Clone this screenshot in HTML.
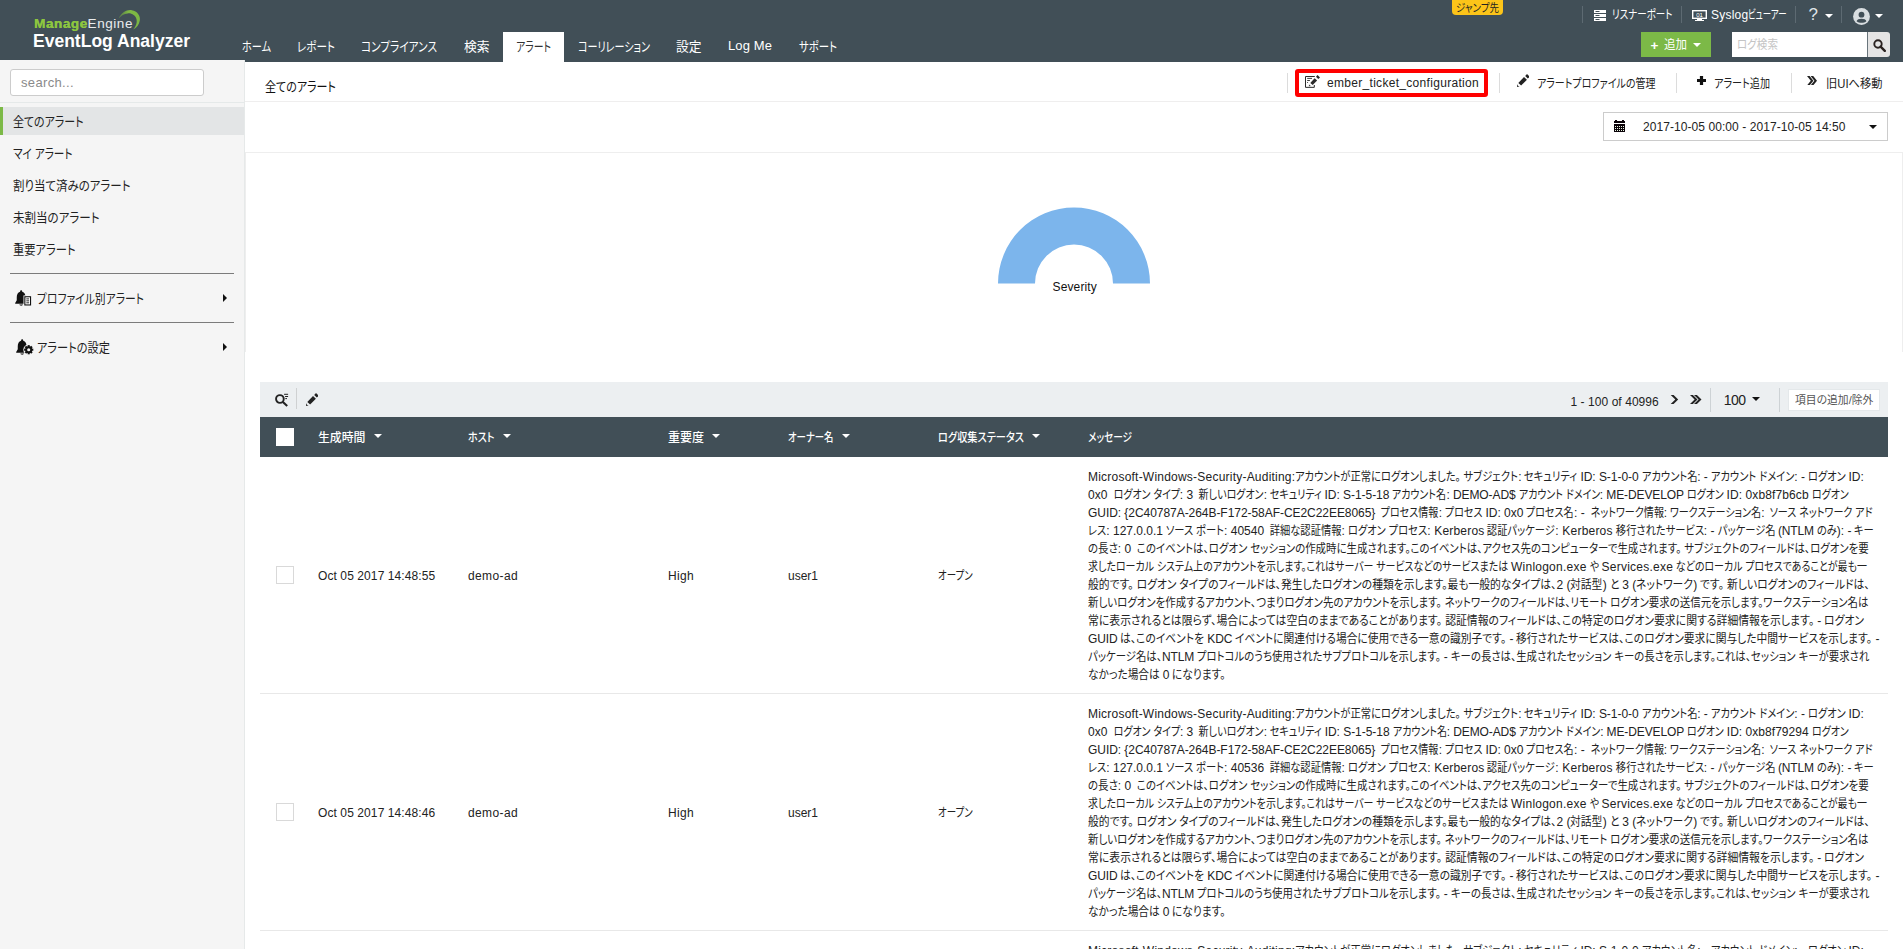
<!DOCTYPE html>
<html lang="ja"><head>
<meta charset="utf-8">
<title>EventLog Analyzer</title>
<style>
*{box-sizing:border-box;margin:0;padding:0}
html,body{width:1903px;height:949px;overflow:hidden;background:#fff}
body{font-family:"Liberation Sans","Noto Sans CJK JP",sans-serif;font-size:12px;color:#222;position:relative}
.abs{position:absolute;white-space:nowrap}
.j{display:inline-block;transform-origin:0 50%;font-feature-settings:"palt";white-space:pre}
.l{white-space:pre}
.t{white-space:pre;display:inline-block}
/* header */
#hdr{position:absolute;left:0;top:0;width:1903px;height:62px;background:#414f57}
#logo1{left:34px;top:15.5px;font-size:13.5px;line-height:16px;font-weight:bold;color:#8dc63f;text-shadow:.35px 0 0 #8dc63f}
#logo1 i{text-shadow:none}
#logo1 i{color:#e9ecee;font-weight:normal;font-style:normal}
#logo2{left:33px;top:31px;font-size:17.5px;line-height:20px;font-weight:bold;color:#fff}
.nav{position:absolute;top:32px;height:30px;line-height:30px;font-size:13px;color:#fff;white-space:nowrap}
#navact{position:absolute;left:503px;top:32px;width:61px;height:30px;background:#fff}
.tr{position:absolute;top:6px;height:18px;line-height:18px;font-size:12px;color:#fff;white-space:nowrap}
.vsep{position:absolute;width:1px;background:#5d6a72}
.caret{position:absolute;width:0;height:0;border-left:4px solid transparent;border-right:4px solid transparent;border-top:4.5px solid #fff}
#jump{left:1452px;top:0;width:51px;height:15px;background:#fcc419;border-radius:0 0 4px 4px;color:#222;font-size:11px;line-height:17px;padding-left:4px;overflow:hidden}
#addbtn{left:1641px;top:32px;width:70px;height:25px;background:#7cb947}
#lsearch{left:1732px;top:32px;width:135px;height:25px;background:#fff;color:#c4c4c4;font-size:12px;line-height:26px;padding-left:5px}
#lsbtn{left:1867px;top:32px;width:23px;height:25px;background:#e4e4e4;border-radius:0 3px 3px 0;border-left:1px solid #69757c}
/* sidebar */
#side{position:absolute;left:0;top:60px;width:245px;height:889px;background:#f5f5f5;border-right:1px solid #e6e9e9}
#sbox{left:10px;top:9px;width:194px;height:27px;background:#fff;border:1px solid #ccc;border-radius:3px;font-size:13px;color:#8a8a8a;line-height:25px;padding-left:10px}
#sline{position:absolute;left:0;top:42px;width:244px;height:1px;background:#e5e9e9}
.sitem{position:absolute;left:13px;height:20px;line-height:20px;font-size:13px;color:#222;white-space:nowrap}
#sact{position:absolute;left:0;top:47px;width:244px;height:28px;background:#e3e5e6;border-left:3px solid #7cb947}
.shr{position:absolute;left:10px;width:224px;height:1px;background:#7b7b7b}
.rarr{position:absolute;left:223px;width:0;height:0;border-top:4px solid transparent;border-bottom:4px solid transparent;border-left:4.5px solid #111}
/* main */
#title{left:265px;top:77px;font-size:13px;line-height:20px;color:#111}
#titlebar{position:absolute;left:245px;top:101px;width:1658px;height:1px;background:#efeeee}
#datebar{position:absolute;left:245px;top:152px;width:1658px;height:200px;border:1px solid #eee;border-bottom:none}
.act2{position:absolute;top:73.6px;height:20px;line-height:20px;font-size:12px;color:#222;white-space:nowrap}
.vsep2{position:absolute;top:73px;width:1px;height:20px;background:#dcdcdc}
#redbox{left:1295px;top:69px;width:193px;height:28px;border:4px solid #f00;border-radius:3px}
#datebox{left:1603px;top:112px;width:285px;height:29px;border:1px solid #ccc;background:#fff}
/* table */
#tbar{position:absolute;left:260px;top:382px;width:1628px;height:35px;background:#eceff1}
#thead{position:absolute;left:260px;top:417px;width:1628px;height:40px;background:#414f57}
.th{position:absolute;top:10.5px;line-height:20px;font-size:12px;font-weight:500;color:#fff;white-space:nowrap}
.row{position:absolute;left:260px;width:1628px;height:237px;border-bottom:1px solid #e8e8e8}
.td{position:absolute;top:110px;line-height:18px;height:18px;font-size:12px;color:#222;white-space:nowrap}
.cb{position:absolute;left:16px;top:109px;width:18px;height:18px;border:1px solid #d9d9d9;background:#fff}
.msg{position:absolute;left:828px;top:11px;width:800px;font-size:12px;line-height:18px;color:#222}
.msg div{white-space:pre;height:18px}
</style>
</head>
<body>
<div id="hdr">
<div class="abs" id="logo1"><span class="t" style="letter-spacing: 0.557px;">Manage<i>Engine</i></span></div>
<svg class="abs" style="left:116px;top:8px" width="26" height="24" viewBox="116 8 26 24"><defs><linearGradient id="sw" x1="0" y1="0" x2="1" y2="0"><stop offset="0" stop-color="#6a9a42" stop-opacity=".55"></stop><stop offset=".45" stop-color="#7fb944"></stop><stop offset="1" stop-color="#7cb843"></stop></linearGradient></defs><path d="M118.7 18.6 C121 12.6,127 9.4,131.8 10.2 C137.3 11.1,140.6 15.6,139.8 20.6 C139.1 25,136.6 28,133.2 29.6 C136 26.5,137.3 22.6,136.6 19.6 C135.6 15.2,131.6 12.9,127.6 13.4 C124 13.8,121 15.6,118.7 18.6Z" fill="url(#sw)"></path></svg>
<div class="abs" id="logo2"><span class="t" style="letter-spacing: 0.006px;">EventLog Analyzer</span></div>
<div id="navact"></div>
<div class="nav" style="left:242px"><span class="t"><span class="j" style="transform: scaleX(0.7795); margin-right: -8.2px;">ホーム</span></span></div>
<div class="nav" style="left:297px"><span class="t"><span class="j" style="transform: scaleX(0.8117); margin-right: -8.81px;">レポート</span></span></div>
<div class="nav" style="left:361px"><span class="t"><span class="j" style="transform: scaleX(0.8197); margin-right: -16.72px;">コンプライアンス</span></span></div>
<div class="nav" style="left:464px"><span class="t"><span class="j" style="transform: scaleX(0.9802); margin-right: -0.52px;">検索</span></span></div>
<div class="nav" style="left:516px;color:#333"><span class="t"><span class="j" style="transform: scaleX(0.758); margin-right: -11.17px;">アラート</span></span></div>
<div class="nav" style="left:578px"><span class="t"><span class="j" style="transform: scaleX(0.7739); margin-right: -21.03px;">コーリレーション</span></span></div>
<div class="nav" style="left:676px"><span class="t"><span class="j" style="transform: scaleX(0.9802); margin-right: -0.52px;">設定</span></span></div>
<div class="nav" style="left:728px;line-height:28px"><span class="t" style="letter-spacing: 0.104px;">Log Me</span></div>
<div class="nav" style="left:799px"><span class="t"><span class="j" style="transform: scaleX(0.7982); margin-right: -9.61px;">サポート</span></span></div>
<div class="abs" id="jump"><span class="t"><span class="j" style="transform: scaleX(0.8641); margin-right: -6.77px;">ジャンプ先</span></span></div>
<div class="vsep" style="left:1582px;top:6px;height:17px"></div>
<svg class="abs" style="left:1594px;top:10px" width="12" height="11" viewBox="0 0 12 11"><g fill="#fff"><rect x="0" y="0" width="12" height="3"></rect><rect x="0" y="4" width="12" height="3"></rect><rect x="0" y="8" width="12" height="3"></rect></g><g fill="#414f57"><rect x="1.5" y="1" width="4" height="1"></rect><rect x="1.5" y="5" width="4" height="1"></rect><rect x="1.5" y="9" width="4" height="1"></rect></g></svg>
<div class="tr" style="left:1612px"><span class="t"><span class="j" style="transform: scaleX(0.7905); margin-right: -16.03px;">リスナーポート</span></span></div>
<div class="vsep" style="left:1681px;top:6px;height:17px"></div>
<svg class="abs" style="left:1692px;top:10px" width="15" height="11" viewBox="0 0 15 11"><rect x=".7" y=".7" width="13.6" height="7.6" fill="none" stroke="#fff" stroke-width="1.4"></rect><rect x="5" y="9" width="5" height="1" fill="#fff"></rect><rect x="3" y="10" width="9" height="1" fill="#fff"></rect><text x="7.5" y="6.7" font-size="6" fill="#fff" text-anchor="middle" font-family="Liberation Sans, sans-serif">01</text></svg>
<div class="tr" style="left:1711px"><span class="t"><span class="l" style="letter-spacing: 0.23px;">Syslog</span><span class="j" style="transform: scaleX(0.7047); margin-right: -16.17px;">ビューアー</span></span></div>
<div class="vsep" style="left:1795px;top:6px;height:17px"></div>
<div class="tr" style="left:1808.5px;font-size:17px;top:6px;color:#dfe4e7">?</div>
<div class="caret" style="left:1825px;top:14px"></div>
<div class="vsep" style="left:1841px;top:6px;height:17px"></div>
<svg class="abs" style="left:1852.5px;top:7.5px" width="17" height="17" viewBox="0 0 17 17"><circle cx="8.5" cy="8.5" r="8.4" fill="#d8dde0"></circle><circle cx="8.5" cy="6.7" r="2.9" fill="#414f57"></circle><path d="M3.6 13.2 C4 9.9,13 9.9,13.4 13.2 C11 15.2,6 15.2,3.6 13.2Z" fill="#414f57"></path></svg>
<div class="caret" style="left:1875px;top:14px"></div>
<div class="abs" id="addbtn"><span class="abs" style="left:9.5px;top:1px;line-height:25px;font-size:13.5px;font-weight:bold;color:#fff">+</span><span class="abs" style="left:23px;top:1px;line-height:24px;font-size:12px;color:#fff"><span class="t"><span class="j" style="transform: scaleX(0.9577); margin-right: -1.02px;">追加</span></span></span><div class="caret" style="left:52px;top:11px"></div></div>
<div class="abs" id="lsearch"><span class="t"><span class="j" style="transform: scaleX(0.8802); margin-right: -5.58px;">ログ検索</span></span></div>
<div class="abs" id="lsbtn"><svg style="position:absolute;left:5px;top:7px" width="13" height="13" viewBox="0 0 13 13"><circle cx="5" cy="5" r="3.7" fill="none" stroke="#2a2220" stroke-width="1.9"></circle><path d="M7.6 7.6 L11.8 11.8" stroke="#2a2220" stroke-width="2.4" stroke-linecap="round"></path></svg></div>
</div>
<div id="side">
<div class="abs" id="sbox"><span class="t" style="letter-spacing: 0.349px;">search...</span></div>
<div id="sline"></div>
<div id="sact"></div>
<div class="sitem" style="top:52px"><span class="t"><span class="j" style="transform: scaleX(0.8427); margin-right: -13.16px;">全てのアラート</span></span></div>
<div class="sitem" style="top:84px"><span class="t"><span class="j" style="transform: scaleX(0.8165); margin-right: -13.37px;">マイ アラート</span></span></div>
<div class="sitem" style="top:116px"><span class="t"><span class="j" style="transform: scaleX(0.8822); margin-right: -15.69px;">割り当て済みのアラート</span></span></div>
<div class="sitem" style="top:148px"><span class="t"><span class="j" style="transform: scaleX(0.8853); margin-right: -11.2px;">未割当のアラート</span></span></div>
<div class="sitem" style="top:180px"><span class="t"><span class="j" style="transform: scaleX(0.866); margin-right: -9.67px;">重要アラート</span></span></div>
<div class="shr" style="top:213px"></div>
<svg class="abs" style="left:15px;top:230px" width="17" height="16" viewBox="0 0 17 16"><g transform="translate(-.2 .3) scale(.98 1.1)"><path d="M6.5 0 C7.3 0,7.6 .6,7.6 1.3 C10 2,11 4,11 6.5 L11 9 L12.6 11.5 L12.6 12.3 L.4 12.3 L.4 11.5 L2 9 L2 6.5 C2 4,3 2,5.4 1.3 C5.4 .6,5.7 0,6.5 0Z" fill="#111"></path><path d="M4.6 12.9 L8.4 12.9 C8.2 14.3,4.8 14.3,4.6 12.9Z" fill="#111"></path></g><rect x="8.5" y="5.4" width="8.2" height="10.6" fill="#f5f5f5"></rect><rect x="9.85" y="6.75" width="5.7" height="8.2" fill="#fff" stroke="#111" stroke-width="1.1"></rect><path d="M11.3 8.9H14.1M11.3 10.85H14.1M11.3 12.8H14.1" stroke="#111" stroke-width=".9"></path></svg>
<div class="sitem" style="left:37px;top:229px"><span class="t"><span class="j" style="transform: scaleX(0.8306); margin-right: -21.83px;">プロファイル別アラート</span></span></div>
<div class="rarr" style="top:234px"></div>
<div class="shr" style="top:262px"></div>
<svg class="abs" style="left:16px;top:279px" width="18" height="17" viewBox="0 0 18 17"><g transform="translate(-.2 .3) scale(.98 1.1)"><path d="M6.5 0 C7.3 0,7.6 .6,7.6 1.3 C10 2,11 4,11 6.5 L11 9 L12.6 11.5 L12.6 12.3 L.4 12.3 L.4 11.5 L2 9 L2 6.5 C2 4,3 2,5.4 1.3 C5.4 .6,5.7 0,6.5 0Z" fill="#111"></path><path d="M4.6 12.9 L8.4 12.9 C8.2 14.3,4.8 14.3,4.6 12.9Z" fill="#111"></path></g><circle cx="12.7" cy="10.7" r="5.4" fill="#f5f5f5"></circle><g fill="#111"><circle cx="12.7" cy="10.7" r="3.5"></circle><g transform="translate(12.7 10.7)"><rect x="-1.05" y="-4.6" width="2.1" height="9.2"></rect><rect x="-1.05" y="-4.6" width="2.1" height="9.2" transform="rotate(45)"></rect><rect x="-1.05" y="-4.6" width="2.1" height="9.2" transform="rotate(90)"></rect><rect x="-1.05" y="-4.6" width="2.1" height="9.2" transform="rotate(135)"></rect></g></g><circle cx="12.7" cy="10.7" r="1.55" fill="#f5f5f5"></circle></svg>
<div class="sitem" style="left:37px;top:278px"><span class="t"><span class="j" style="transform: scaleX(0.8618); margin-right: -11.7px;">アラートの設定</span></span></div>
<div class="rarr" style="top:283px"></div>
</div>
<div class="abs" id="title"><span class="t"><span class="j" style="transform: scaleX(0.8487); margin-right: -12.66px;">全てのアラート</span></span></div>
<div id="titlebar"></div>
<div class="vsep2" style="left:1287px"></div>
<div class="abs" id="redbox"></div>
<svg class="abs" style="left:1305px;top:75px" width="16" height="14" viewBox="0 0 16 14"><path d="M9.8 1.5H.5V12.35H9.3V10" fill="none" stroke="#2a2a2a" stroke-width="1"></path><path d="M2.2 3.4H7M2.2 5.5H4.9" stroke="#2a2a2a" stroke-width=".9"></path><circle cx="2.6" cy="7.5" r=".55" fill="#2a2a2a"></circle><path d="M5.3 7.9 L9.6 3.3 L12.1 5.4 L7.7 9.9 Z" fill="#2a2a2a"></path><path d="M4 8.7 C4.1 10,5 10.8,6.3 10.9 L3.9 11.3 Z" fill="#2a2a2a"></path><path d="M11 1.8 L12.5 0 L15 2.4 L13.3 3.9Z" fill="#2a2a2a"></path></svg>
<div class="act2" style="left:1327px;top:73px"><span class="t" style="letter-spacing: 0.304px;">ember_ticket_configuration</span></div>
<div class="vsep2" style="left:1499px"></div>
<svg class="abs" style="left:1516.5px;top:74px" width="12.5" height="13" viewBox="-.5 -.3 12.5 13"><path d="M.8 8.6 L6.5 2.8 L9.4 5.5 L3.6 11.3 Z" fill="#222"></path><path d="M-.4 9.4 C-.1 11.3,1 12.1,2.6 12.3 L-.4 12.7 Z" fill="#222"></path><path d="M7.7 1.6 L9.5 -.3 L12.2 2.4 L10.3 4.3Z" fill="#222"></path></svg>
<div class="act2" style="left:1537px"><span class="t"><span class="j" style="transform: scaleX(0.8317); margin-right: -23.98px;">アラートプロファイルの管理</span></span></div>
<div class="vsep2" style="left:1676px"></div>
<svg class="abs" style="left:1697px;top:76px" width="9" height="9" viewBox="0 0 9 9"><path d="M2.9 0H6.1V2.9H9V6.1H6.1V9H2.9V6.1H0V2.9H2.9Z" fill="#111"></path></svg>
<div class="act2" style="left:1714px"><span class="t"><span class="j" style="transform: scaleX(0.8405); margin-right: -10.62px;">アラート追加</span></span></div>
<div class="vsep2" style="left:1791px"></div>
<svg class="abs" style="left:1807px;top:76px" width="10" height="9.4" viewBox="0 0 10 9.4"><path d="M0 0H2.6L6.4 4.7L2.6 9.4H0L3.8 4.7Z" fill="#222"></path><path d="M3.6 0H6.2L10 4.7L6.2 9.4H3.6L7.4 4.7Z" fill="#222"></path></svg>
<div class="act2" style="left:1826px"><span class="t"><span class="j" style="transform: scaleX(0.9387); margin-right: -3.69px;">旧UIへ移動</span></span></div>
<div class="abs" id="datebox">
<svg style="position:absolute;left:10px;top:7px" width="11" height="12" viewBox="0 0 11 12" shape-rendering="crispEdges"><g fill="#0a0208"><rect x="1" y="0" width="2" height="1"></rect><rect x="8" y="0" width="2" height="1"></rect><rect x="0" y="1" width="11" height="2"></rect><rect x="0" y="4" width="11" height="8"></rect></g><g fill="#e8f5e0"><rect x="1" y="6" width="1" height="1"></rect><rect x="3" y="6" width="1" height="1"></rect><rect x="5" y="6" width="1" height="1"></rect><rect x="7" y="6" width="1" height="1"></rect><rect x="9" y="6" width="1" height="1"></rect><rect x="1" y="8" width="1" height="1"></rect><rect x="3" y="8" width="1" height="1"></rect><rect x="5" y="8" width="1" height="1"></rect><rect x="7" y="8" width="1" height="1"></rect><rect x="9" y="8" width="1" height="1"></rect><rect x="1" y="10" width="1" height="1"></rect><rect x="3" y="10" width="1" height="1"></rect><rect x="5" y="10" width="1" height="1"></rect><rect x="7" y="10" width="1" height="1"></rect><rect x="9" y="10" width="1" height="1"></rect></g></svg>
<div class="abs" style="left:39px;top:4px;line-height:20px;font-size:12px;color:#222"><span class="t" style="letter-spacing: 0.067px;">2017-10-05 00:00 - 2017-10-05 14:50</span></div>
<div class="caret" style="left:265px;top:12px;border-top-color:#111"></div>
</div>
<div id="datebar"></div>
<svg class="abs" style="left:990px;top:200px" width="170" height="100" viewBox="990 200 170 100"><path d="M998 283.5 A76 76 0 0 1 1150 283.5 L1113 283.5 A39 39 0 0 0 1035 283.5 Z" fill="#7cb5ec"></path></svg>
<div class="abs" style="left:1052.5px;top:277px;line-height:20px;font-size:12px;color:#111"><span class="t" style="letter-spacing: 0.143px;">Severity</span></div>
<div id="tbar">
<svg class="abs" style="left:15px;top:11px" width="14" height="14" viewBox="0 0 14 14"><circle cx="4.9" cy="6" r="3.85" fill="none" stroke="#222" stroke-width="1.9"></circle><path d="M7.9 9 L12.2 13" stroke="#222" stroke-width="2.1"></path><path d="M9.1 1.3H13.1M10.1 3.5H13.1M10.3 5.6H12" stroke="#222" stroke-width="1"></path></svg>
<div class="abs" style="left:36px;top:6px;width:1px;height:21px;background:#cfd1d2"></div>
<svg class="abs" style="left:45.5px;top:10.7px" width="12.5" height="13" viewBox="-.5 -.3 12.5 13"><path d="M.8 8.6 L6.5 2.8 L9.4 5.5 L3.6 11.3 Z" fill="#222"></path><path d="M-.4 9.4 C-.1 11.3,1 12.1,2.6 12.3 L-.4 12.7 Z" fill="#222"></path><path d="M7.7 1.6 L9.5 -.3 L12.2 2.4 L10.3 4.3Z" fill="#222"></path></svg>
<div class="abs" style="left:1310.5px;top:9.5px;line-height:20px;font-size:12px;color:#222"><span class="t" style="letter-spacing: 0.056px;">1 - 100 of 40996</span></div>
<svg class="abs" style="left:1410px;top:13px" width="9" height="9" viewBox="0 0 9 9"><path d="M.7 0H3.6L8.2 4.5L3.6 9H.7L5.3 4.5Z" fill="#222"></path></svg>
<svg class="abs" style="left:1429.8px;top:13px" width="12" height="9" viewBox="0 0 12 9"><path d="M0 0H2.9L7.5 4.5L2.9 9H0L4.6 4.5Z" fill="#222"></path><path d="M4 0H6.9L11.5 4.5L6.9 9H4L8.6 4.5Z" fill="#222"></path></svg>
<div class="abs" style="left:1450px;top:6px;width:1px;height:24px;background:#cdd2d5"></div>
<div class="abs" style="left:1463.8px;top:8px;line-height:20px;font-size:14px;color:#222"><span class="t" style="letter-spacing: -0.52px;">100</span></div>
<div class="caret" style="left:1492px;top:15px;border-top-color:#111"></div>
<div class="abs" style="left:1519px;top:6px;width:1px;height:24px;background:#cdd2d5"></div>
<div class="abs" style="left:1527.5px;top:6.5px;width:92px;height:22px;background:#fff;border:1px solid #e4e8ea"><div class="abs" style="left:6px;top:0;line-height:20px;font-size:11px;color:#555"><span class="t"><span class="j" style="transform: scaleX(0.9828); margin-right: -1.37px;">項目の追加/除外</span></span></div></div>
</div>
<div id="thead">
<div class="abs" style="left:16px;top:11px;width:18px;height:18px;background:#fff"></div>
<div class="th" style="left:58px"><span class="t"><span class="j" style="transform: scaleX(0.9893); margin-right: -0.52px;">生成時間</span></span></div><div class="caret" style="left:114px;top:17px"></div>
<div class="th" style="left:208px"><span class="t"><span class="j" style="transform: scaleX(0.8367); margin-right: -5.17px;">ホスト</span></span></div><div class="caret" style="left:243px;top:17px"></div>
<div class="th" style="left:408px"><span class="t"><span class="j" style="transform: scaleX(0.9996); margin-right: -0.02px;">重要度</span></span></div><div class="caret" style="left:452px;top:17px"></div>
<div class="th" style="left:528px"><span class="t"><span class="j" style="transform: scaleX(0.7824); margin-right: -12.66px;">オーナー名</span></span></div><div class="caret" style="left:582px;top:17px"></div>
<div class="th" style="left:678px"><span class="t"><span class="j" style="transform: scaleX(0.8485); margin-right: -15.36px;">ログ収集ステータス</span></span></div><div class="caret" style="left:772px;top:17px"></div>
<div class="th" style="left:828px"><span class="t"><span class="j" style="transform: scaleX(0.8046); margin-right: -10.69px;">メッセージ</span></span></div>
</div>
<div class="row" style="top:457px">
<div class="cb"></div>
<div class="td" style="left:58px"><span class="t" style="letter-spacing: 0.093px;">Oct 05 2017 14:48:55</span></div>
<div class="td" style="left:208px"><span class="t" style="letter-spacing: 0.375px;">demo-ad</span></div>
<div class="td" style="left:408px"><span class="t" style="letter-spacing: 0.328px;">High</span></div>
<div class="td" style="left:528px"><span class="t" style="letter-spacing: -0.006px;">user1</span></div>
<div class="td" style="left:678px"><span class="t"><span class="j" style="transform: scaleX(0.7889); margin-right: -9.26px;">オープン</span></span></div>
<div class="msg">
<div><span class="t"><span class="l" style="letter-spacing: 0.22px;">Microsoft-Windows-Security-Auditing:</span><span class="j" style="transform: scaleX(0.8566); margin-right: -37.31px;">アカウントが正常にログオンしました。 サブジェクト</span><span class="l">:</span><span class="j" style="transform: scaleX(0.8566); margin-right: -9.86px;"> セキュリティ </span><span class="l" style="letter-spacing: -0.04px;">ID: S-1-0-0</span><span class="j" style="transform: scaleX(0.8566); margin-right: -9.8px;"> アカウント名</span><span class="l">: -</span><span class="j" style="transform: scaleX(0.8566); margin-right: -14.47px;"> アカウント ドメイン</span><span class="l">: -</span><span class="j" style="transform: scaleX(0.8566); margin-right: -7.31px;"> ログオン </span><span class="l" style="letter-spacing: -0.1px;">ID:</span></span></div>
<div><span class="t"><span class="l" style="letter-spacing: 0.1px;">0x0</span><span class="j" style="transform: scaleX(0.8354); margin-right: -14.22px;">  ログオン タイプ</span><span class="l">: 3</span><span class="j" style="transform: scaleX(0.8354); margin-right: -13.9px;">  新しいログオン</span><span class="l">:</span><span class="j" style="transform: scaleX(0.8354); margin-right: -11.32px;"> セキュリティ </span><span class="l" style="letter-spacing: -0.04px;">ID: S-1-5-18</span><span class="j" style="transform: scaleX(0.8354); margin-right: -11.25px;"> アカウント名</span><span class="l" style="letter-spacing: -0.09px;">: DEMO-AD$</span><span class="j" style="transform: scaleX(0.8354); margin-right: -16.61px;"> アカウント ドメイン</span><span class="l" style="letter-spacing: -0.11px;">: ME-DEVELOP</span><span class="j" style="transform: scaleX(0.8354); margin-right: -8.39px;"> ログオン </span><span class="l" style="letter-spacing: 0.11px;">ID: 0xb8f7b6cb</span><span class="j" style="transform: scaleX(0.8354); margin-right: -7.84px;"> ログオン</span></span></div>
<div><span class="t"><span class="l" style="letter-spacing: -0.05px;">GUID: {2C40787A-264B-F172-58AF-CE2C22EE8065}</span><span class="j" style="transform: scaleX(0.8389); margin-right: -12.18px;">  プロセス情報</span><span class="l">:</span><span class="j" style="transform: scaleX(0.8389); margin-right: -8.32px;"> プロセス </span><span class="l">ID: 0x0</span><span class="j" style="transform: scaleX(0.8389); margin-right: -9.71px;"> プロセス名</span><span class="l">: -</span><span class="j" style="transform: scaleX(0.8389); margin-right: -15.16px;">  ネットワーク情報</span><span class="l">:</span><span class="j" style="transform: scaleX(0.8389); margin-right: -18.07px;"> ワークステーション名</span><span class="l">:</span><span class="j" style="transform: scaleX(0.8389); margin-right: -20.84px;">  ソース ネットワーク アド</span></span></div>
<div><span class="t"><span class="j" style="transform: scaleX(0.8567); margin-right: -3.06px;">レス</span><span class="l">: 127.0.0.1</span><span class="j" style="transform: scaleX(0.8567); margin-right: -10.21px;"> ソース ポート</span><span class="l">: 40540</span><span class="j" style="transform: scaleX(0.8567); margin-right: -12.96px;">  詳細な認証情報</span><span class="l">:</span><span class="j" style="transform: scaleX(0.8567); margin-right: -13.74px;"> ログオン プロセス</span><span class="l" style="letter-spacing: 0.2px;">: Kerberos</span><span class="j" style="transform: scaleX(0.8567); margin-right: -11.84px;"> 認証パッケージ</span><span class="l" style="letter-spacing: 0.2px;">: Kerberos</span><span class="j" style="transform: scaleX(0.8567); margin-right: -15.25px;"> 移行されたサービス</span><span class="l">: -</span><span class="j" style="transform: scaleX(0.8567); margin-right: -10.6px;"> パッケージ名 </span><span class="l" style="letter-spacing: -0.12px;">(NTLM</span><span class="j" style="transform: scaleX(0.8567); margin-right: -3.82px;"> のみ</span><span class="l">): -</span><span class="j" style="transform: scaleX(0.8567); margin-right: -3.78px;"> キー</span></span></div>
<div><span class="t"><span class="j" style="transform: scaleX(0.8707); margin-right: -4.43px;">の長さ</span><span class="l">: 0</span><span class="j" style="transform: scaleX(0.8707); margin-right: -109.52px;">  このイベントは、ログオン セッションの作成時に生成されます。このイベントは、アクセス先のコンピューターで生成されます。 サブジェクトのフィールドは、ログオンを要</span></span></div>
<div><span class="t"><span class="j" style="transform: scaleX(0.8309); margin-right: -86.07px;">求したローカル システム上のアカウントを示します。これはサーバー サービスなどのサービスまたは </span><span class="l" style="letter-spacing: 0.24px;">Winlogon.exe</span><span class="j" style="transform: scaleX(0.8309); margin-right: -3.03px;"> や </span><span class="l" style="letter-spacing: 0.24px;">Services.exe</span><span class="j" style="transform: scaleX(0.8309); margin-right: -39.46px;"> などのローカル プロセスであることが最も一</span></span></div>
<div><span class="t"><span class="j" style="transform: scaleX(0.8981); margin-right: -53.17px;">般的です。 ログオン タイプのフィールドは、発生したログオンの種類を示します。最も一般的なタイプは、</span><span class="l">2 (</span><span class="j" style="transform: scaleX(0.8981); margin-right: -3.67px;">対話型</span><span class="l">)</span><span class="j" style="transform: scaleX(0.8981); margin-right: -1.76px;"> と </span><span class="l">3 (</span><span class="j" style="transform: scaleX(0.8981); margin-right: -6.47px;">ネットワーク</span><span class="l">)</span><span class="j" style="transform: scaleX(0.8981); margin-right: -19.61px;"> です。 新しいログオンのフィールドは、</span></span></div>
<div><span class="t"><span class="j" style="transform: scaleX(0.8706); margin-right: -116px;">新しいログオンを作成するアカウント、つまりログオン先のアカウントを示します。 ネットワークのフィールドは、リモート ログオン要求の送信元を示します。ワークステーション名は</span></span></div>
<div><span class="t"><span class="j" style="transform: scaleX(0.9044); margin-right: -77.07px;">常に表示されるとは限らず、場合によっては空白のままであることがあります。 認証情報のフィールドは、この特定のログオン要求に関する詳細情報を示します。 </span><span class="l">-</span><span class="j" style="transform: scaleX(0.9044); margin-right: -4.55px;"> ログオン</span></span></div>
<div><span class="t"><span class="l" style="letter-spacing: -0.15px;">GUID</span><span class="j" style="transform: scaleX(0.896); margin-right: -10.44px;"> は、このイベントを </span><span class="l" style="letter-spacing: -0.15px;">KDC</span><span class="j" style="transform: scaleX(0.896); margin-right: -32.17px;"> イベントに関連付ける場合に使用できる一意の識別子です。 </span><span class="l">-</span><span class="j" style="transform: scaleX(0.896); margin-right: -42.02px;"> 移行されたサービスは、このログオン要求に関与した中間サービスを示します。 </span><span class="l">-</span></span></div>
<div><span class="t"><span class="j" style="transform: scaleX(0.8672); margin-right: -11.33px;">パッケージ名は、</span><span class="l" style="letter-spacing: -0.15px;">NTLM</span><span class="j" style="transform: scaleX(0.8672); margin-right: -38.24px;"> プロトコルのうち使用されたサブプロトコルを示します。 </span><span class="l">-</span><span class="j" style="transform: scaleX(0.8672); margin-right: -64.5px;"> キーの長さは、生成されたセッション キーの長さを示します。これは、セッション キーが要求され</span></span></div>
<div><span class="t"><span class="j" style="transform: scaleX(0.8924); margin-right: -9.01px;">なかった場合は </span><span class="l">0</span><span class="j" style="transform: scaleX(0.8924); margin-right: -6.82px;"> になります。</span></span></div>
</div>
</div>
<div class="row" style="top:694px">
<div class="cb"></div>
<div class="td" style="left:58px"><span class="t" style="letter-spacing: 0.093px;">Oct 05 2017 14:48:46</span></div>
<div class="td" style="left:208px"><span class="t" style="letter-spacing: 0.375px;">demo-ad</span></div>
<div class="td" style="left:408px"><span class="t" style="letter-spacing: 0.328px;">High</span></div>
<div class="td" style="left:528px"><span class="t" style="letter-spacing: -0.006px;">user1</span></div>
<div class="td" style="left:678px"><span class="t"><span class="j" style="transform: scaleX(0.7889); margin-right: -9.26px;">オープン</span></span></div>
<div class="msg">
<div><span class="t"><span class="l" style="letter-spacing: 0.22px;">Microsoft-Windows-Security-Auditing:</span><span class="j" style="transform: scaleX(0.8566); margin-right: -37.31px;">アカウントが正常にログオンしました。 サブジェクト</span><span class="l">:</span><span class="j" style="transform: scaleX(0.8566); margin-right: -9.86px;"> セキュリティ </span><span class="l" style="letter-spacing: -0.04px;">ID: S-1-0-0</span><span class="j" style="transform: scaleX(0.8566); margin-right: -9.8px;"> アカウント名</span><span class="l">: -</span><span class="j" style="transform: scaleX(0.8566); margin-right: -14.47px;"> アカウント ドメイン</span><span class="l">: -</span><span class="j" style="transform: scaleX(0.8566); margin-right: -7.31px;"> ログオン </span><span class="l" style="letter-spacing: -0.1px;">ID:</span></span></div>
<div><span class="t"><span class="l" style="letter-spacing: 0.1px;">0x0</span><span class="j" style="transform: scaleX(0.836); margin-right: -14.17px;">  ログオン タイプ</span><span class="l">: 3</span><span class="j" style="transform: scaleX(0.836); margin-right: -13.84px;">  新しいログオン</span><span class="l">:</span><span class="j" style="transform: scaleX(0.836); margin-right: -11.27px;"> セキュリティ </span><span class="l" style="letter-spacing: -0.04px;">ID: S-1-5-18</span><span class="j" style="transform: scaleX(0.836); margin-right: -11.21px;"> アカウント名</span><span class="l" style="letter-spacing: -0.09px;">: DEMO-AD$</span><span class="j" style="transform: scaleX(0.836); margin-right: -16.55px;"> アカウント ドメイン</span><span class="l" style="letter-spacing: -0.11px;">: ME-DEVELOP</span><span class="j" style="transform: scaleX(0.836); margin-right: -8.36px;"> ログオン </span><span class="l" style="letter-spacing: 0.04px;">ID: 0xb8f79294</span><span class="j" style="transform: scaleX(0.836); margin-right: -7.81px;"> ログオン</span></span></div>
<div><span class="t"><span class="l" style="letter-spacing: -0.05px;">GUID: {2C40787A-264B-F172-58AF-CE2C22EE8065}</span><span class="j" style="transform: scaleX(0.8389); margin-right: -12.18px;">  プロセス情報</span><span class="l">:</span><span class="j" style="transform: scaleX(0.8389); margin-right: -8.32px;"> プロセス </span><span class="l">ID: 0x0</span><span class="j" style="transform: scaleX(0.8389); margin-right: -9.71px;"> プロセス名</span><span class="l">: -</span><span class="j" style="transform: scaleX(0.8389); margin-right: -15.16px;">  ネットワーク情報</span><span class="l">:</span><span class="j" style="transform: scaleX(0.8389); margin-right: -18.07px;"> ワークステーション名</span><span class="l">:</span><span class="j" style="transform: scaleX(0.8389); margin-right: -20.84px;">  ソース ネットワーク アド</span></span></div>
<div><span class="t"><span class="j" style="transform: scaleX(0.8567); margin-right: -3.06px;">レス</span><span class="l">: 127.0.0.1</span><span class="j" style="transform: scaleX(0.8567); margin-right: -10.21px;"> ソース ポート</span><span class="l">: 40536</span><span class="j" style="transform: scaleX(0.8567); margin-right: -12.96px;">  詳細な認証情報</span><span class="l">:</span><span class="j" style="transform: scaleX(0.8567); margin-right: -13.74px;"> ログオン プロセス</span><span class="l" style="letter-spacing: 0.2px;">: Kerberos</span><span class="j" style="transform: scaleX(0.8567); margin-right: -11.84px;"> 認証パッケージ</span><span class="l" style="letter-spacing: 0.2px;">: Kerberos</span><span class="j" style="transform: scaleX(0.8567); margin-right: -15.25px;"> 移行されたサービス</span><span class="l">: -</span><span class="j" style="transform: scaleX(0.8567); margin-right: -10.6px;"> パッケージ名 </span><span class="l" style="letter-spacing: -0.12px;">(NTLM</span><span class="j" style="transform: scaleX(0.8567); margin-right: -3.82px;"> のみ</span><span class="l">): -</span><span class="j" style="transform: scaleX(0.8567); margin-right: -3.78px;"> キー</span></span></div>
<div><span class="t"><span class="j" style="transform: scaleX(0.8707); margin-right: -4.43px;">の長さ</span><span class="l">: 0</span><span class="j" style="transform: scaleX(0.8707); margin-right: -109.52px;">  このイベントは、ログオン セッションの作成時に生成されます。このイベントは、アクセス先のコンピューターで生成されます。 サブジェクトのフィールドは、ログオンを要</span></span></div>
<div><span class="t"><span class="j" style="transform: scaleX(0.8309); margin-right: -86.07px;">求したローカル システム上のアカウントを示します。これはサーバー サービスなどのサービスまたは </span><span class="l" style="letter-spacing: 0.24px;">Winlogon.exe</span><span class="j" style="transform: scaleX(0.8309); margin-right: -3.03px;"> や </span><span class="l" style="letter-spacing: 0.24px;">Services.exe</span><span class="j" style="transform: scaleX(0.8309); margin-right: -39.46px;"> などのローカル プロセスであることが最も一</span></span></div>
<div><span class="t"><span class="j" style="transform: scaleX(0.8981); margin-right: -53.17px;">般的です。 ログオン タイプのフィールドは、発生したログオンの種類を示します。最も一般的なタイプは、</span><span class="l">2 (</span><span class="j" style="transform: scaleX(0.8981); margin-right: -3.67px;">対話型</span><span class="l">)</span><span class="j" style="transform: scaleX(0.8981); margin-right: -1.76px;"> と </span><span class="l">3 (</span><span class="j" style="transform: scaleX(0.8981); margin-right: -6.47px;">ネットワーク</span><span class="l">)</span><span class="j" style="transform: scaleX(0.8981); margin-right: -19.61px;"> です。 新しいログオンのフィールドは、</span></span></div>
<div><span class="t"><span class="j" style="transform: scaleX(0.8706); margin-right: -116px;">新しいログオンを作成するアカウント、つまりログオン先のアカウントを示します。 ネットワークのフィールドは、リモート ログオン要求の送信元を示します。ワークステーション名は</span></span></div>
<div><span class="t"><span class="j" style="transform: scaleX(0.9044); margin-right: -77.07px;">常に表示されるとは限らず、場合によっては空白のままであることがあります。 認証情報のフィールドは、この特定のログオン要求に関する詳細情報を示します。 </span><span class="l">-</span><span class="j" style="transform: scaleX(0.9044); margin-right: -4.55px;"> ログオン</span></span></div>
<div><span class="t"><span class="l" style="letter-spacing: -0.15px;">GUID</span><span class="j" style="transform: scaleX(0.896); margin-right: -10.44px;"> は、このイベントを </span><span class="l" style="letter-spacing: -0.15px;">KDC</span><span class="j" style="transform: scaleX(0.896); margin-right: -32.17px;"> イベントに関連付ける場合に使用できる一意の識別子です。 </span><span class="l">-</span><span class="j" style="transform: scaleX(0.896); margin-right: -42.02px;"> 移行されたサービスは、このログオン要求に関与した中間サービスを示します。 </span><span class="l">-</span></span></div>
<div><span class="t"><span class="j" style="transform: scaleX(0.8672); margin-right: -11.33px;">パッケージ名は、</span><span class="l" style="letter-spacing: -0.15px;">NTLM</span><span class="j" style="transform: scaleX(0.8672); margin-right: -38.24px;"> プロトコルのうち使用されたサブプロトコルを示します。 </span><span class="l">-</span><span class="j" style="transform: scaleX(0.8672); margin-right: -64.5px;"> キーの長さは、生成されたセッション キーの長さを示します。これは、セッション キーが要求され</span></span></div>
<div><span class="t"><span class="j" style="transform: scaleX(0.8924); margin-right: -9.01px;">なかった場合は </span><span class="l">0</span><span class="j" style="transform: scaleX(0.8924); margin-right: -6.82px;"> になります。</span></span></div>
</div>
</div>
<div class="row" style="top:931px">
<div class="cb"></div>
<div class="td" style="left:58px"><span class="t" style="letter-spacing: 0.093px;">Oct 05 2017 14:48:40</span></div>
<div class="td" style="left:208px"><span class="t" style="letter-spacing: 0.375px;">demo-ad</span></div>
<div class="td" style="left:408px"><span class="t" style="letter-spacing: 0.328px;">High</span></div>
<div class="td" style="left:528px"><span class="t" style="letter-spacing: -0.006px;">user1</span></div>
<div class="td" style="left:678px"><span class="t"><span class="j" style="transform: scaleX(0.7889); margin-right: -9.26px;">オープン</span></span></div>
<div class="msg">
<div><span class="t"><span class="l" style="letter-spacing: 0.22px;">Microsoft-Windows-Security-Auditing:</span><span class="j" style="transform: scaleX(0.8566); margin-right: -37.31px;">アカウントが正常にログオンしました。 サブジェクト</span><span class="l">:</span><span class="j" style="transform: scaleX(0.8566); margin-right: -9.86px;"> セキュリティ </span><span class="l" style="letter-spacing: -0.04px;">ID: S-1-0-0</span><span class="j" style="transform: scaleX(0.8566); margin-right: -9.8px;"> アカウント名</span><span class="l">: -</span><span class="j" style="transform: scaleX(0.8566); margin-right: -14.47px;"> アカウント ドメイン</span><span class="l">: -</span><span class="j" style="transform: scaleX(0.8566); margin-right: -7.31px;"> ログオン </span><span class="l" style="letter-spacing: -0.1px;">ID:</span></span></div>
</div>
</div>


</body></html>
